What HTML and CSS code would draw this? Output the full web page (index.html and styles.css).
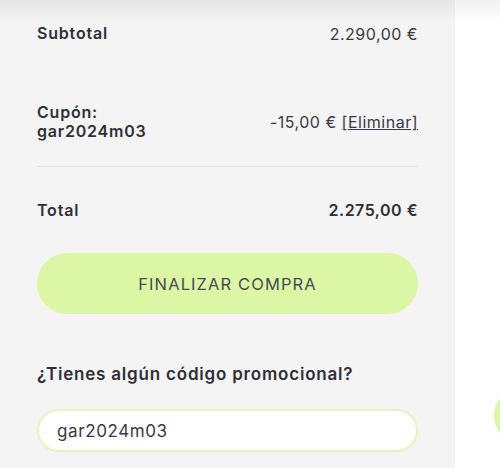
FILE: index.html
```html
<!DOCTYPE html>
<html lang="es">
<head>
<meta charset="utf-8">
<title>Carrito</title>
<link rel="stylesheet" href="styles.css">
</head>
<body>
<div class="page">
  <section class="summary">
    <div class="row row-sub">
      <span class="label">Subtotal</span>
      <span class="value">2.290,00 €</span>
    </div>
    <div class="row row-coupon">
      <span class="label">Cupón:<br>gar2024m03</span>
      <span class="value">-15,00 € <a class="remove" href="#">[Eliminar]</a></span>
    </div>
    <div class="row row-total">
      <span class="label">Total</span>
      <span class="value strong">2.275,00 €</span>
    </div>
    <button class="checkout">FINALIZAR COMPRA</button>
    <h3 class="promo-title">¿Tienes algún código promocional?</h3>
    <div class="promo-input">gar2024m03</div>
  </section>
  <aside class="side">
    <div class="fab"></div>
  </aside>
</div>
<div class="top-shadow"></div>
</body>
</html>
```

FILE: styles.css
```css
* { box-sizing: border-box; }
html, body { margin: 0; padding: 0; }
body {
  width: 500px;
  height: 468px;
  overflow: hidden;
  background: #ffffff;
  font-family: "Inter", "Noto Sans", sans-serif;
  color: #2f2f38;
  position: relative;
}
.page {
  display: flex;
  height: 468px;
}
.summary {
  width: 455px;
  background: #f4f4f4;
  padding: 0 37px;
  display: flex;
  flex-direction: column;
}
.side {
  flex: 1;
  background: #fff;
  position: relative;
  overflow: hidden;
}
.row {
  display: flex;
  justify-content: space-between;
  align-items: center;
  font-size: 16px;
}
.label { font-weight: 600; line-height: 19px; letter-spacing: 0.8px; }
.value { font-weight: 400; color: #3a3a44; letter-spacing: 0.5px; }
.value.strong { font-weight: 600; color: #2f2f38; letter-spacing: 0.5px; }
.row-sub { height: 67px; }
.row-coupon {
  height: 100px;
  padding-top: 10px;
  border-bottom: 1px solid #e6e6e6;
}
.remove { color: #3a3a44; text-decoration: underline; }
.row-total { height: 86px; }
.checkout {
  height: 61px;
  border: none;
  border-radius: 31px;
  background: #dbf7a6;
  color: #4a4a52;
  font-family: inherit;
  font-size: 16.5px;
  font-weight: 400;
  letter-spacing: 1.1px;
  width: 100%;
  padding: 0;
}
.promo-title {
  margin: 50px 0 0;
  font-size: 17px;
  font-weight: 600;
  line-height: 20px;
  letter-spacing: 0.8px;
}
.promo-input {
  margin-top: 25px;
  height: 43px;
  background: #fff;
  border: 2px solid #e2f6bb;
  border-radius: 22px;
  padding-left: 18px;
  display: flex;
  align-items: center;
  font-size: 17px;
  letter-spacing: 0.6px;
  color: #3a3a44;
}
.top-shadow {
  position: absolute;
  left: 0; top: 0;
  width: 500px; height: 22px;
  background: linear-gradient(to bottom, rgba(0,0,0,0.06), rgba(0,0,0,0));
  pointer-events: none;
}
.fab {
  position: absolute;
  left: 39px; top: 387px;
  width: 57px; height: 57px;
  border-radius: 50%;
  background: #dbf7a6;
}
```
